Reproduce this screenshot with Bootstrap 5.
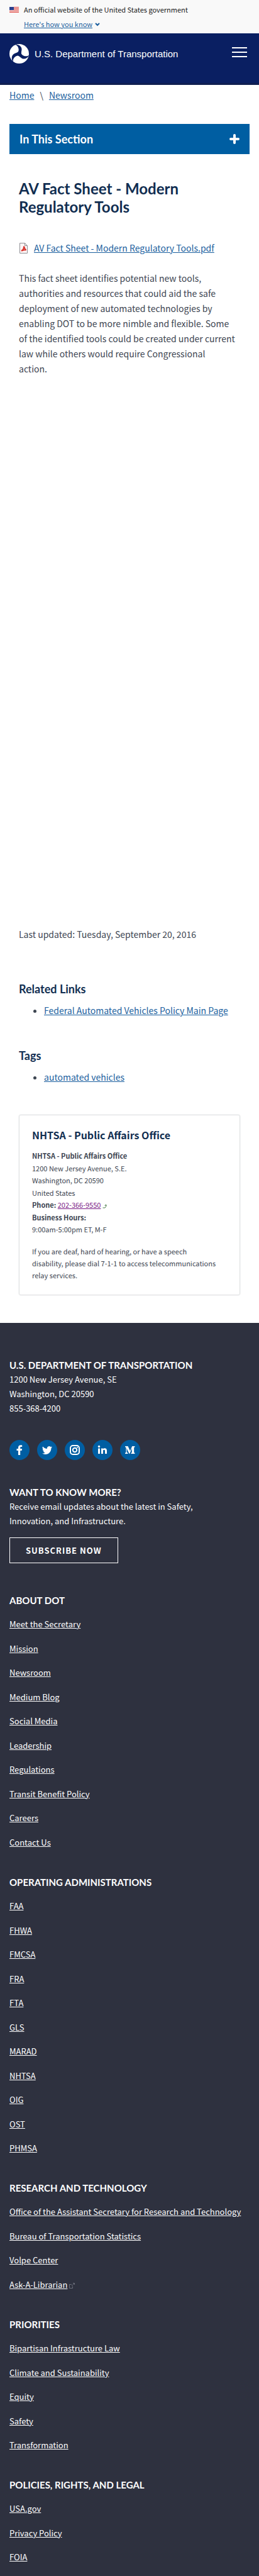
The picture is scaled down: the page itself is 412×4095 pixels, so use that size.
<!DOCTYPE html>
<html lang="en">
<head>
<meta charset="utf-8">
<meta name="viewport" content="width=device-width, initial-scale=1">
<title>AV Fact Sheet - Modern Regulatory Tools | US Department of Transportation</title>
<link href="https://cdn.jsdelivr.net/npm/bootstrap@5.3.0/dist/css/bootstrap.min.css" rel="stylesheet">
<style>
:root { --sans: "Source Sans Pro", "Noto Sans CJK SC", sans-serif; --head: Lato, sans-serif; --navy: #112e51; --blue: #005ea2; }
body { font-family: var(--sans); font-size: 14px; line-height: 24px; color: #3d4551; }
a { color: #1b5f9e; }
p, ul, h1, h2 { margin: 0; }
.gov-banner { background: #f9f9f9; color: #1b1b1b; font-size: 11px; line-height: 23px; padding: 4px 15px 3px; gap: 8px; }
.gov-banner svg.flag { margin-top: 7px; }
.gov-banner button { font-size: 11px; line-height: 23px; color: #1b5f9e; }
.site-head { background: #0a1f62; border-bottom: 3px solid #101f50; padding: 17px 19px 31px 15px; }
.site-head .brand { gap: 9px; }
.brand-name { font-family: "Liberation Sans", Arial, sans-serif; font-size: 15px; color: #fff; }
.crumbs { padding: 4px 15px 34px; gap: 9px; }
.gutter { padding: 0 15px; }
.section-toggle { background: var(--blue); color: #fff; font: 700 18px/24px var(--head); padding: 12px 16px; }
.section-toggle:hover { background: var(--navy); color: #fff; }
h1, h2 { font-family: var(--head); color: var(--navy); font-weight: 700; }
h1 { font-size: 24px; line-height: 29px; }
h2 { font-size: 18px; line-height: 24px; }
.article { padding: 40px 30px 44px; }
.file-link { margin: 39px 0 24px; gap: 10px; }
.intro { padding-right: 2px; }
.updated { margin-top: 875px; margin-bottom: 63px; }
.article ul { padding-left: 40px; margin-top: 10px; margin-bottom: 48px; }
.office { border: 1px solid #dfe1e2; border-radius: 3px; box-shadow: 0 0 2px #dfe1e2; padding: 19px 8px 21px 20px; font-size: 11px; line-height: 19px; }
.office h2 { font: 700 16px/24px var(--sans); margin-bottom: 12px; }
.office address { margin-bottom: 16px; }
.office address div:nth-child(even) { margin-top: 1px; }
.office .phone { color: #7a1a85; }
.site-foot { background: #2e313f; color: #fff; padding: 56px 15px 19px; font-size: 13px; line-height: 23px; }
.site-foot h2 { font: 700 15px/22px var(--head); color: #fff; text-transform: uppercase; }
.site-foot a { color: #fff; }
.social { gap: 12px; margin: 39px 0 40px; }
.social a { width: 32px; height: 32px; background: var(--blue); }
.foot-links { margin-bottom: 41px; line-height: 22px; }
.foot-links:last-child { margin-bottom: 0; }
.foot-links li { margin-top: 16px; }
.foot-links li:nth-child(even) { margin-top: 17px; }
.btn-subscribe { border: 1px solid #fff; border-radius: 0; color: #fff; font: 700 13px/21px var(--sans); letter-spacing: 1px; padding: 9px 25px; margin: 15px 0 48px; }
</style>
</head>
<body>
<section class="gov-banner d-flex align-items-start" aria-label="Official government website">
  <svg class="flag" width="15" height="10" viewBox="0 0 15 10" aria-hidden="true"><rect width="15" height="10" fill="#fff"/><path d="M0 .5h15M0 2.500h15M0 4.500h15M0 6.500h15M0 8.500h15" stroke="#d83933"/><rect width="7" height="5" fill="#2a3e8c"/></svg>
  <div>
    <div>An official website of the United States government</div>
    <button class="btn btn-link border-0 p-0 d-flex align-items-center gap-1" type="button">Here's how you know <svg width="8" height="6" viewBox="0 0 8 6" fill="none" stroke="currentColor" stroke-width="2" aria-hidden="true"><path d="M1 1l3 3 3-3"/></svg></button>
  </div>
</section>
<header class="site-head d-flex justify-content-between align-items-start">
  <a href="#" class="brand d-flex align-items-center text-decoration-none">
    <svg width="31" height="31" viewBox="-15.500 -15.500 31 31" aria-hidden="true"><defs><path id="arm" d="M-6.500 -14.800C0 -15.500 4.800 -11 4 -6C3.500 -3 3 -1 4 2L-4 2C-3 -1 0 -4 -1 -8C-1.500 -11 -3 -13.500 -6.500 -14.800Z"/></defs><circle r="15.500" fill="#fff"/><g fill="#0a1f62"><use href="#arm"/><use href="#arm" transform="rotate(120)"/><use href="#arm" transform="rotate(240)"/></g></svg>
    <span class="brand-name">U.S. Department of Transportation</span>
  </a>
  <button class="btn border-0 p-0 mt-1 d-flex" type="button" aria-label="Menu"><svg width="24" height="18" viewBox="0 0 24 18" stroke="#fff" stroke-width="2" aria-hidden="true"><path d="M0 2h24M0 9h24M0 16h24"/></svg></button>
</header>
<main>
  <nav class="crumbs d-flex" aria-label="Breadcrumb"><a href="#">Home</a><span>\</span><a href="#">Newsroom</a></nav>
  <div class="gutter">
    <button class="section-toggle btn rounded-0 border-0 w-100 d-flex justify-content-between align-items-center" type="button">In This Section
      <svg width="16" height="16" viewBox="0 0 16 16" stroke="#fff" stroke-width="4" stroke-linecap="round" aria-hidden="true"><path d="M2 8h12M8 2v12"/></svg></button>
  </div>
  <article class="article">
    <h1>AV Fact Sheet - Modern Regulatory Tools</h1>
    <p class="file-link d-flex align-items-center">
      <svg width="14" height="17" viewBox="0 0 14 17" fill="none" aria-hidden="true"><path d="M1.500 .5h8l4 4v12h-12z" fill="#fdf5f5" stroke="#8f8f94"/><path d="M9.500 .5v4h4" stroke="#8f8f94"/><path d="M4 12.500c3-1 4-4 4-7 1 4 2 5 3.500 6-3-.5-5 0-7.500 1.500" stroke="#d8332c" stroke-width="2"/></svg>
      <a href="#">AV Fact Sheet - Modern Regulatory Tools.pdf</a>
    </p>
    <p class="intro">This fact sheet identifies potential new tools, authorities and resources that could aid the safe deployment of new automated technologies by enabling DOT to be more nimble and flexible. Some of the identified tools could be created under current law while others would require Congressional<br> action.</p>
    <p class="updated">Last updated: Tuesday, September 20, 2016</p>
    <h2>Related Links</h2>
    <ul><li><a href="#">Federal Automated Vehicles Policy Main Page</a></li></ul>
    <h2>Tags</h2>
    <ul><li><a href="#">automated vehicles</a></li></ul>
    <section class="office">
      <h2>NHTSA - Public Affairs Office</h2>
      <address>
        <div><strong>NHTSA - Public Affairs Office</strong></div>
        <div>1200 New Jersey Avenue, S.E.</div>
        <div>Washington, DC 20590</div>
        <div>United States</div>
        <div><strong>Phone:</strong> <a class="phone" href="tel:202-366-9550">202-366-9550</a> <svg width="7" height="7" viewBox="0 0 7 7" fill="none" stroke="#4a7a4a" aria-hidden="true"><path d="M.5 6h3.500l1.500-1.500v-3M3.500 2.500l2-1.500 1 1.500"/></svg></div>
        <div><strong>Business Hours:</strong></div>
        <div>9:00am-5:00pm ET, M-F</div>
      </address>
      <p>If you are deaf, hard of hearing, or have a speech<br> disability, please dial 7-1-1 to access telecommunications<br> relay services.</p>
    </section>
  </article>
</main>
<footer class="site-foot">
  <h2>U.S. Department of Transportation</h2>
  <div>1200 New Jersey Avenue, SE</div>
  <div>Washington, DC 20590</div>
  <div>855-368-4200</div>
  <div class="social d-flex">
    <a href="#" class="rounded-circle d-flex align-items-center justify-content-center" aria-label="Facebook"><svg width="16" height="16" viewBox="0 0 16 16" fill="#fff"><path d="M6 16V9H3.500V6H6V4.200C6 1.600 7.500.2 10 .2c1 0 1.800.1 2.200.2v2.600h-1.500C9.400 3 9.200 3.600 9.200 4.500V6h2.900l-.4 3H9.200v7z"/></svg></a>
    <a href="#" class="rounded-circle d-flex align-items-center justify-content-center" aria-label="Twitter"><svg width="16" height="16" viewBox="0 0 16 16" fill="#fff"><path d="M5.030 15c6.040 0 9.340-5 9.340-9.330v-.42A6.700 6.700 0 0 0 16 3.540a6.600 6.600 0 0 1-1.890.52 3.300 3.300 0 0 0 1.450-1.820 6.500 6.500 0 0 1-2.090.79 3.290 3.290 0 0 0-5.600 3A9.320 9.320 0 0 1 1.110 2.600a3.290 3.290 0 0 0 1.020 4.380 3.300 3.300 0 0 1-1.490-.4v.04a3.290 3.290 0 0 0 2.640 3.220 3.200 3.200 0 0 1-1.480.06 3.290 3.290 0 0 0 3.070 2.280A6.600 6.600 0 0 1 0 13.540 9.300 9.300 0 0 0 5.030 15"/></svg></a>
    <a href="#" class="rounded-circle d-flex align-items-center justify-content-center" aria-label="Instagram"><svg width="16" height="16" viewBox="0 0 16 16" fill="none" stroke="#fff" stroke-width="2"><rect x="1" y="1" width="14" height="14" rx="4"/><circle cx="8" cy="8" r="3.200"/><circle cx="12" cy="4" r="1" fill="#fff" stroke="none"/></svg></a>
    <a href="#" class="rounded-circle d-flex align-items-center justify-content-center" aria-label="LinkedIn"><svg width="16" height="16" viewBox="0 0 16 16" fill="#fff"><circle cx="2.500" cy="2.500" r="1.700"/><path d="M1 5.500h3V14H1zM6 5.500h2.800v1.200C9.300 5.800 10.300 5.300 11.600 5.300c2.700 0 3.400 1.700 3.400 4V14h-3V9.800c0-1.100-.2-2-1.500-2S9 8.700 9 9.800V14H6z"/></svg></a>
    <a href="#" class="rounded-circle d-flex align-items-center justify-content-center" aria-label="Medium"><svg width="16" height="16" viewBox="0 0 16 16" fill="#fff"><path d="M0 2h4.500L8 9.500 11.200 2H15.500v1l-1.300 1.200v7.600L15.500 13v1H9.500v-1l1.300-1.200V5.500L7.200 14h-.6L2.600 5.500v5.900L4.500 13v1H0v-1l1.500-1.600V4.200L0 3z"/></svg></a>
  </div>
  <h2>Want to know more?</h2>
  <p>Receive email updates about the latest in Safety,<br> Innovation, and Infrastructure.</p>
  <button type="button" class="btn btn-subscribe d-block">SUBSCRIBE NOW</button>
  <nav class="foot-links" aria-labelledby="f-about">
    <h2 id="f-about">About DOT</h2>
    <ul class="list-unstyled">
      <li><a href="#">Meet the Secretary</a></li>
      <li><a href="#">Mission</a></li>
      <li><a href="#">Newsroom</a></li>
      <li><a href="#">Medium Blog</a></li>
      <li><a href="#">Social Media</a></li>
      <li><a href="#">Leadership</a></li>
      <li><a href="#">Regulations</a></li>
      <li><a href="#">Transit Benefit Policy</a></li>
      <li><a href="#">Careers</a></li>
      <li><a href="#">Contact Us</a></li>
    </ul>
  </nav>
  <nav class="foot-links" aria-labelledby="f-admin">
    <h2 id="f-admin">Operating Administrations</h2>
    <ul class="list-unstyled">
      <li><a href="#">FAA</a></li>
      <li><a href="#">FHWA</a></li>
      <li><a href="#">FMCSA</a></li>
      <li><a href="#">FRA</a></li>
      <li><a href="#">FTA</a></li>
      <li><a href="#">GLS</a></li>
      <li><a href="#">MARAD</a></li>
      <li><a href="#">NHTSA</a></li>
      <li><a href="#">OIG</a></li>
      <li><a href="#">OST</a></li>
      <li><a href="#">PHMSA</a></li>
    </ul>
  </nav>
  <nav class="foot-links" aria-labelledby="f-research">
    <h2 id="f-research">Research and Technology</h2>
    <ul class="list-unstyled">
      <li><a href="#">Office of the Assistant Secretary for Research and Technology</a></li>
      <li><a href="#">Bureau of Transportation Statistics</a></li>
      <li><a href="#">Volpe Center</a></li>
      <li><a href="#">Ask-A-Librarian</a> <svg width="9" height="9" viewBox="0 0 9 9" fill="none" stroke="#6a6d79" aria-hidden="true"><path d="M4 2.500H.5v6h5v-3M4 5l4-4M6 .5h2.500V3"/></svg></li>
    </ul>
  </nav>
  <nav class="foot-links" aria-labelledby="f-priorities">
    <h2 id="f-priorities">Priorities</h2>
    <ul class="list-unstyled">
      <li><a href="#">Bipartisan Infrastructure Law</a></li>
      <li><a href="#">Climate and Sustainability</a></li>
      <li><a href="#">Equity</a></li>
      <li><a href="#">Safety</a></li>
      <li><a href="#">Transformation</a></li>
    </ul>
  </nav>
  <nav class="foot-links" aria-labelledby="f-legal">
    <h2 id="f-legal">Policies, Rights, and Legal</h2>
    <ul class="list-unstyled">
      <li><a href="#">USA.gov</a></li>
      <li><a href="#">Privacy Policy</a></li>
      <li><a href="#">FOIA</a></li>
    </ul>
  </nav>
</footer>
<script src="https://cdn.jsdelivr.net/npm/bootstrap@5.3.0/dist/js/bootstrap.bundle.min.js"></script>
</body>
</html>
